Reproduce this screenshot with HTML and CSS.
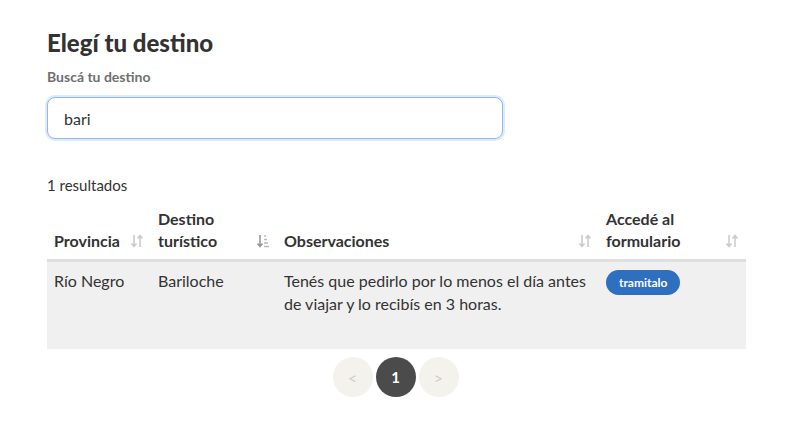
FILE: index.html
```html
<!DOCTYPE html>
<html lang="es">
<head>
<meta charset="utf-8">
<link rel="stylesheet" href="styles.css">
</head>
<body>
<main class="page">
  <h2 class="title">Elegí tu destino</h2>
  <label class="label" for="q">Buscá tu destino</label>
  <input id="q" class="search" type="text" value="bari">
  <p class="count">1 resultados</p>
  <table class="results">
    <colgroup>
      <col class="c1"><col class="c2"><col class="c3"><col class="c4">
    </colgroup>
    <thead>
      <tr>
        <th><div class="th"><span>Provincia</span><svg class="sort" viewBox="0 0 14 16"><path d="M4 2v11M1.5 10.5L4 13.5l2.5-3M10 14V3M7.5 5.5L10 2.5l2.5 3" fill="none" stroke="#ccc" stroke-width="1.6"/></svg></div></th>
        <th><div class="th"><span>Destino<br>turístico</span><svg class="sort" viewBox="0 0 14 16"><path d="M4 2v11M1.5 10.5L4 13.5l2.5-3" fill="none" stroke="#999" stroke-width="1.6"/><path d="M8 3h2M8 6.5h3M8 10h4M8 13.5h5" stroke="#bbb" stroke-width="1.6"/></svg></div></th>
        <th><div class="th"><span>Observaciones</span><svg class="sort" viewBox="0 0 14 16"><path d="M4 2v11M1.5 10.5L4 13.5l2.5-3M10 14V3M7.5 5.5L10 2.5l2.5 3" fill="none" stroke="#ccc" stroke-width="1.6"/></svg></div></th>
        <th><div class="th"><span>Accedé al<br>formulario</span><svg class="sort" viewBox="0 0 14 16"><path d="M4 2v11M1.5 10.5L4 13.5l2.5-3M10 14V3M7.5 5.5L10 2.5l2.5 3" fill="none" stroke="#ccc" stroke-width="1.6"/></svg></div></th>
      </tr>
    </thead>
    <tbody>
      <tr>
        <td>Río Negro</td>
        <td>Bariloche</td>
        <td>Tenés que pedirlo por lo menos el día antes de viajar y lo recibís en 3 horas.</td>
        <td><a class="badge" href="#">tramitalo</a></td>
      </tr>
    </tbody>
  </table>
  <nav class="pager">
    <span class="pg off">&lt;</span>
    <span class="pg on">1</span>
    <span class="pg off">&gt;</span>
  </nav>
</main>
</body>
</html>
```
FILE: styles.css
```css
html, body { margin: 0; background: #fff; }
body { font-family: Lato, "Noto Sans", sans-serif; color: #333; }
.page { padding: 29px 54px 0 47px; display: flex; flex-direction: column; align-items: flex-start; }
.title { margin: 0; font-size: 24px; font-weight: 900; line-height: 28px; color: #333; }
.label { margin-top: 11px; font-size: 14px; font-weight: 700; color: #707070; line-height: 18px; }
.search {
  margin-top: 11px; box-sizing: border-box; width: 456px; height: 42px;
  border: 1px solid #8fb8ef; border-radius: 8px; box-shadow: 0 0 0 2px rgba(120,170,240,0.25);
  padding: 0 16px; font: 16px Lato, sans-serif; color: #333; outline: none;
}
.count { margin: 36px 0 0; font-size: 15px; line-height: 20px; color: #333; }
.results { margin-top: 13px; width: 699px; table-layout: fixed; border-collapse: collapse; }
.c1 { width: 104px; } .c2 { width: 126px; } .c3 { width: 322px; } .c4 { width: 147px; }
.results th { text-align: left; vertical-align: bottom; padding: 0 7px 7px; border-bottom: 3px solid #dedede; font-size: 16px; font-weight: 700; line-height: 22px; color: #333; }
.th { display: flex; justify-content: space-between; align-items: flex-end; }
.sort { width: 14px; height: 16px; margin-bottom: 3px; flex: none; }
.results td { background: #f0f0f0; vertical-align: top; padding: 7px 7px 34px; font-size: 16px; line-height: 23px; color: #333; }
.badge { display: inline-block; background: #2e6fbf; color: #fff; font-size: 12px; font-weight: 700; text-decoration: none; line-height: 25px; padding: 0 13px; border-radius: 13px; margin-top: 1px; }
.pager { align-self: stretch; width: 697px; display: flex; justify-content: center; gap: 3px; margin-top: 8px; }
.pg { width: 40px; height: 40px; border-radius: 50%; display: flex; align-items: center; justify-content: center; font-size: 15px; font-weight: 700; }
.pg.off { background: #f4f2ec; color: #d2ccc4; font-size: 16px; font-weight: 400; }
.pg.on { background: #4b4b4b; color: #fff; }
```
